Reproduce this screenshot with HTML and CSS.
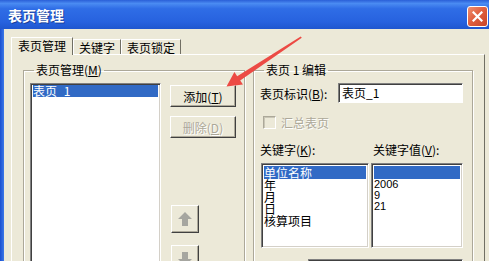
FILE: index.html
```html
<!DOCTYPE html>
<html lang="zh-CN">

<head>
    <meta charset="UTF-8" />
    <title>表页管理</title>
    <link rel="stylesheet" href="styles.css">
</head>

<body>
    <div class="window">
        <!-- Title bar -->
        <div class="titlebar">
            <span class="title">表页管理</span>
            <span class="close-btn">
                <svg width="11" height="11" viewBox="0 0 11 11">
                    <path d="M1.5 1.5 L9.5 9.5 M9.5 1.5 L1.5 9.5" stroke="#fff" stroke-width="2.2" stroke-linecap="square" />
                </svg>
            </span>
        </div>

        <div class="frame">
            <div class="frame-edge"></div>
            <div class="client">
                <!-- Tabs -->
                <div class="tabs">
                    <div class="tab active">表页管理</div>
                    <div class="tab">关键字</div>
                    <div class="tab">表页锁定</div>
                </div>

                <div class="panel">
                    <!-- Sheet list -->
                    <fieldset class="group group-left">
                        <legend>表页管理(<u>M</u>)</legend>
                        <div class="group-row">
                            <div class="listbox sheets">
                                <div class="item selected">表页_1</div>
                            </div>
                            <div class="side-buttons">
                                <button class="btn">添加(<u>T</u>)</button>
                                <button class="btn btn-delete" disabled>删除(<u>D</u>)</button>
                                <button class="btn btn-icon btn-up" disabled>
                                    <svg width="16" height="16" viewBox="0 0 16 16">
                                        <path d="M8 1 L15 8 L11 8 L11 15 L5 15 L5 8 L1 8 Z" fill="#a6a6a0" />
                                    </svg>
                                </button>
                                <button class="btn btn-icon btn-down" disabled>
                                    <svg width="16" height="16" viewBox="0 0 16 16">
                                        <path d="M5 1 L11 1 L11 8 L15 8 L8 15 L1 8 L5 8 Z" fill="#a6a6a0" />
                                    </svg>
                                </button>
                            </div>
                        </div>
                    </fieldset>

                    <!-- Sheet edit -->
                    <fieldset class="group group-right">
                        <legend>表页 1 编辑</legend>
                        <div class="id-row">
                            <label class="id-label">表页标识(<u>B</u>):</label>
                            <div class="textbox">表页_1</div>
                        </div>
                        <div class="check-row">
                            <span class="checkbox"></span>
                            <span class="check-text">汇总表页</span>
                        </div>
                        <div class="kw-labels">
                            <span class="kw-label">关键字(<u>K</u>):</span>
                            <span>关键字值(<u>V</u>):</span>
                        </div>
                        <div class="kw-lists">
                            <div class="listbox keys">
                                <div class="item selected">单位名称</div>
                                <div class="item">年</div>
                                <div class="item">月</div>
                                <div class="item">日</div>
                                <div class="item">核算项目</div>
                            </div>
                            <div class="listbox values">
                                <div class="item selected"></div>
                                <div class="item">2006</div>
                                <div class="item">9</div>
                                <div class="item">21</div>
                            </div>
                        </div>
                        <div class="bottom-row">
                            <div class="textbox wide"></div>
                        </div>
                    </fieldset>
                </div>
            </div>
        </div>
    </div>

    <!-- Red pointer drawn over the screenshot -->
    <svg class="pointer" width="489" height="261" viewBox="0 0 489 261">
        <polygon points="300.7,36.6 301.8,37.8 240.2,80.4 243,84.6 226.5,86.5 234.4,72 237.2,76.2" fill="#ec4a44" />
    </svg>
</body>

</html>
```

FILE: styles.css
```css
body {
    margin: 0;
    width: 489px;
    height: 261px;
    overflow: hidden;
    position: relative;
    background-color: #ece9d8;
    font-family: "Noto Sans CJK SC", "Liberation Sans", sans-serif;
    font-size: 12px;
    color: #000;
}

.window {
    display: flex;
    flex-direction: column;
    height: 100%;
}

/* Title bar */
.titlebar {
    height: 29px;
    flex-shrink: 0;
    display: flex;
    align-items: center;
    justify-content: space-between;
    padding: 0 1px 0 8px;
    background: linear-gradient(#2a5fd8 0%, #4a8bf2 12%, #2f6de6 30%, #2762df 75%, #1f56cf 100%);
    box-sizing: border-box;
}

.title {
    color: #fff;
    font-size: 14px;
    font-weight: bold;
    text-shadow: 1px 1px 0 #1a3f9a;
}

.close-btn {
    width: 19px;
    height: 19px;
    margin-top: 3px;
    display: flex;
    align-items: center;
    justify-content: center;
    border: 1px solid #fff;
    border-radius: 3px;
    background: linear-gradient(135deg, #f09070 0%, #e06040 45%, #c84428 100%);
}

.frame {
    flex: 1;
    display: flex;
}

.frame-edge {
    width: 4px;
    background: linear-gradient(90deg, #1a4fd0, #3c78e8);
}

.client {
    flex: 1;
    padding: 8px 0 0 7px;
}

/* Tabs */
.tabs {
    display: flex;
    align-items: flex-end;
    height: 17px;
}

.tab {
    height: 15px;
    line-height: 15px;
    padding: 0 5px;
    border-top: 1px solid #fff;
    border-left: 1px solid #fff;
    border-right: 1px solid #716f64;
    box-sizing: border-box;
    background-color: #ece9d8;
}

.tab.active {
    position: relative;
    height: 18px;
    line-height: 16px;
    margin-bottom: -1px;
    padding: 0 6px;
}

.panel {
    width: 474px;
    height: 220px;
    display: flex;
    padding: 8px 0 0 11px;
    box-sizing: border-box;
    border-top: 1px solid #fff;
    border-left: 1px solid #fff;
    border-right: 1px solid #716f64;
}

/* Group boxes */
.group {
    margin: 0;
    padding: 6px 8px 0 6px;
    height: 240px;
    min-width: 0;
    box-sizing: border-box;
    border: 1px solid #aca899;
    box-shadow: inset 1px 1px 0 #fff, 1px 1px 0 #fff;
}

.group legend {
    margin-left: 4px;
    padding: 0 2px;
    line-height: 14px;
}

.group-left {
    width: 222px;
}

.group-right {
    width: 220px;
    margin-left: 8px;
}

.group-row {
    display: flex;
}

/* List boxes */
.listbox {
    background-color: #fff;
    border-top: 1px solid #808080;
    border-left: 1px solid #808080;
    border-right: 1px solid #fff;
    border-bottom: 1px solid #fff;
    box-shadow: inset 1px 1px 0 #404040, inset -1px -1px 0 #d4d0c8;
    padding: 2px;
    box-sizing: border-box;
}

.listbox .item {
    height: 12px;
    line-height: 12px;
    white-space: nowrap;
}

.listbox .item.selected {
    height: 13px;
    line-height: 13px;
    background-color: #316ac5;
    color: #fff;
}

.sheets {
    width: 131px;
    height: 200px;
    padding: 1px 2px;
}

.sheets .item.selected {
    height: 12px;
    line-height: 12px;
}

/* Buttons */
.side-buttons {
    display: flex;
    flex-direction: column;
    align-items: flex-start;
    margin-left: 9px;
    padding-top: 2px;
}

.btn {
    width: 66px;
    height: 22px;
    padding: 0;
    font-family: inherit;
    font-size: 12px;
    color: #000;
    background-color: #ece9d8;
    border: 1px solid;
    border-color: #fff #404040 #404040 #fff;
    box-shadow: inset -1px -1px 0 #aca899;
}

.btn:disabled {
    color: #aca899;
    text-shadow: 1px 1px 0 #fff;
}

.btn-delete {
    margin-top: 9px;
}

.btn-icon {
    width: 28px;
    height: 28px;
    display: flex;
    align-items: center;
    justify-content: center;
    margin-left: 1px;
}

.btn-up {
    margin-top: 67px;
}

.btn-down {
    margin-top: 12px;
}

/* Right group contents */
.id-row {
    display: flex;
    align-items: center;
    height: 20px;
}

.id-label {
    width: 78px;
}

.textbox {
    width: 125px;
    height: 20px;
    line-height: 17px;
    padding-left: 3px;
    box-sizing: border-box;
    background-color: #fff;
    border-top: 1px solid #808080;
    border-left: 1px solid #808080;
    border-right: 1px solid #fff;
    border-bottom: 1px solid #fff;
    box-shadow: inset 1px 1px 0 #404040;
}

.check-row {
    display: flex;
    align-items: center;
    height: 13px;
    margin-top: 13px;
}

.checkbox {
    width: 13px;
    height: 13px;
    margin-left: 3px;
    box-sizing: border-box;
    border-top: 1px solid #aca899;
    border-left: 1px solid #aca899;
    border-right: 1px solid #fff;
    border-bottom: 1px solid #fff;
    box-shadow: inset 1px 1px 0 #c9c6b6;
}

.check-text {
    margin-left: 5px;
    color: #aca899;
    text-shadow: 1px 1px 0 #fff;
}

.kw-labels {
    display: flex;
    margin-top: 14px;
    line-height: 14px;
}

.kw-label {
    width: 113px;
}

.kw-lists {
    display: flex;
    margin-top: 6px;
    margin-left: 1px;
}

.keys {
    width: 108px;
    height: 85px;
}

.values {
    width: 92px;
    height: 85px;
    margin-left: 2px;
    font-family: "Liberation Sans", sans-serif;
    font-size: 11px;
}

.values .item {
    height: 11px;
    line-height: 11px;
}

.bottom-row {
    margin-top: 11px;
    padding-left: 48px;
}

.textbox.wide {
    width: 155px;
}

/* Annotation arrow */
.pointer {
    position: absolute;
    left: 0;
    top: 0;
    pointer-events: none;
}
```
